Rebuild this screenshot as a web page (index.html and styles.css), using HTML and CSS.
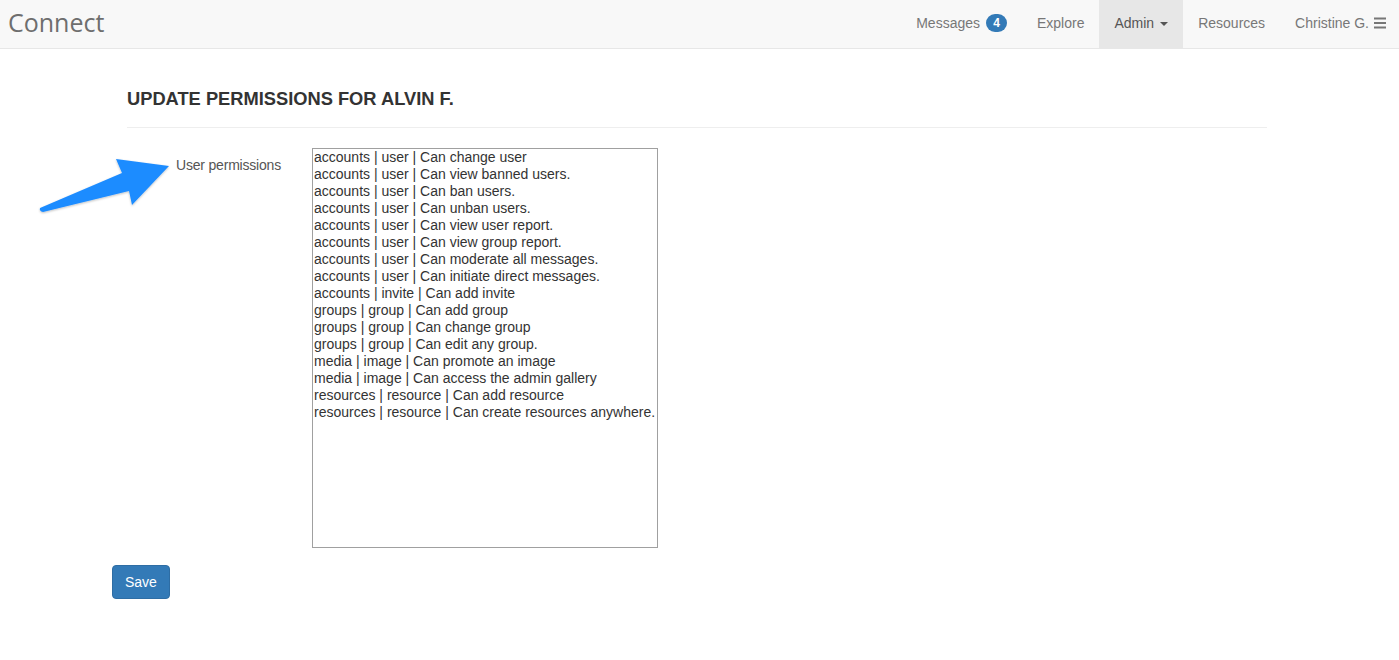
FILE: index.html
```html
<!DOCTYPE html>
<html lang="en">
<head>
<meta charset="utf-8">
<title>Connect</title>
<link rel="stylesheet" href="styles.css">
</head>
<body>
<nav class="navbar">
  <a class="brand" href="#">Connect</a>
  <ul class="nav">
    <li><a href="#">Messages <span class="badge">4</span></a></li>
    <li><a href="#">Explore</a></li>
    <li class="active"><a href="#">Admin <span class="caret"></span></a></li>
    <li><a href="#">Resources</a></li>
    <li class="user"><a href="#">Christine G. <svg class="burger" width="12" height="12" viewBox="0 0 12 12"><rect x="0" y="0.5" width="12" height="2" fill="#777"/><rect x="0" y="5" width="12" height="2" fill="#777"/><rect x="0" y="9.5" width="12" height="2" fill="#777"/></svg></a></li>
  </ul>
</nav>
<main class="page">
  <h1 class="title">UPDATE PERMISSIONS FOR ALVIN F.</h1>
  <hr class="rule">
  <form class="form">
    <div class="form-row">
      <label class="label" for="perms">User permissions</label>
      <select id="perms" class="perms" multiple>
        <option>accounts | user | Can change user</option>
        <option>accounts | user | Can view banned users.</option>
        <option>accounts | user | Can ban users.</option>
        <option>accounts | user | Can unban users.</option>
        <option>accounts | user | Can view user report.</option>
        <option>accounts | user | Can view group report.</option>
        <option>accounts | user | Can moderate all messages.</option>
        <option>accounts | user | Can initiate direct messages.</option>
        <option>accounts | invite | Can add invite</option>
        <option>groups | group | Can add group</option>
        <option>groups | group | Can change group</option>
        <option>groups | group | Can edit any group.</option>
        <option>media | image | Can promote an image</option>
        <option>media | image | Can access the admin gallery</option>
        <option>resources | resource | Can add resource</option>
        <option>resources | resource | Can create resources anywhere.</option>
      </select>
    </div>
    <button type="button" class="btn">Save</button>
  </form>
  <svg class="arrow" width="140" height="64" viewBox="38 156 140 64">
    <defs>
      <filter id="sh" x="-10%" y="-10%" width="130%" height="140%">
        <feDropShadow dx="0" dy="1" stdDeviation="1" flood-color="#000" flood-opacity="0.25"/>
      </filter>
    </defs>
    <path d="M40 208 L122 173 L116 159 L169 166 L132 205 L129 191 L43 212 Q39 211 40 208 Z" fill="#1e8cff" filter="url(#sh)"/>
  </svg>
</main>
</body>
</html>
```
FILE: styles.css
```css
html, body {
  margin: 0;
  padding: 0;
  background: #fff;
  font-family: "Liberation Sans", Arial, sans-serif;
  font-size: 14px;
  color: #333;
}

.navbar {
  display: flex;
  justify-content: space-between;
  align-items: stretch;
  height: 48px;
  background: #f8f8f8;
  border-bottom: 1px solid #e7e7e7;
}

.brand {
  display: block;
  padding: 5px 8px 0;
  font-family: "Open Sans", "Liberation Sans", sans-serif;
  font-size: 25px;
  line-height: 34px;
  color: #6e6e6e;
  text-decoration: none;
}

.nav {
  display: flex;
  list-style: none;
  margin: 0;
  padding: 0;
}

.nav li a {
  display: flex;
  align-items: center;
  height: 48px;
  box-sizing: border-box;
  padding: 0 15px 2px;
  color: #777;
  text-decoration: none;
  line-height: 20px;
}

.nav li.active a {
  background: #e7e7e7;
  color: #555;
}

.nav li.user a {
  padding-right: 13px;
}

.badge {
  display: inline-block;
  margin-left: 6px;
  min-width: 21px;
  height: 18px;
  box-sizing: border-box;
  padding: 0 6px;
  border-radius: 10px;
  background: #337ab7;
  color: #fff;
  font-size: 12px;
  font-weight: bold;
  line-height: 18px;
  text-align: center;
}

.caret {
  display: inline-block;
  width: 0;
  height: 0;
  margin-left: 6px;
  margin-top: 2px;
  border-top: 4px solid #555;
  border-left: 4px solid transparent;
  border-right: 4px solid transparent;
}

.burger {
  margin-left: 5px;
  margin-top: -1px;
}

.page {
  position: relative;
  width: 1140px;
  margin-left: 127px;
  padding-top: 40px;
}

.title {
  margin: 0;
  font-size: 18.3px;
  line-height: 20px;
  font-weight: bold;
  color: #333;
}

.rule {
  margin: 18px 0 20px;
  border: 0;
  border-top: 1px solid #eee;
  height: 0;
}

.form-row {
  display: flex;
  align-items: flex-start;
  gap: 31px;
}

.label {
  width: 154px;
  padding-top: 7px;
  text-align: right;
  line-height: 20px;
  color: #555;
  font-size: 14px;
  letter-spacing: -0.2px;
}

.perms {
  width: 346px;
  height: 400px;
  margin: 0;
  padding: 0;
  box-sizing: border-box;
  border: 1px solid #a0a0a0;
  border-radius: 0;
  font-family: "Liberation Sans", Arial, sans-serif;
  font-size: 14px;
  color: #333;
  background: #fff;
  overflow: hidden;
}

.perms option {
  display: block;
  min-height: 0;
  height: 17px;
  box-sizing: border-box;
  padding: 0 1px;
  line-height: 17px;
}

.btn {
  display: block;
  margin: 17px 0 0 -15px;
  padding: 6px 12px;
  border: 1px solid #2e6da4;
  border-radius: 4px;
  background: #337ab7;
  color: #fff;
  font-family: "Liberation Sans", Arial, sans-serif;
  font-size: 14px;
  line-height: 20px;
  cursor: pointer;
}

.arrow {
  position: absolute;
  left: -89px;
  top: 107px;
}
```
